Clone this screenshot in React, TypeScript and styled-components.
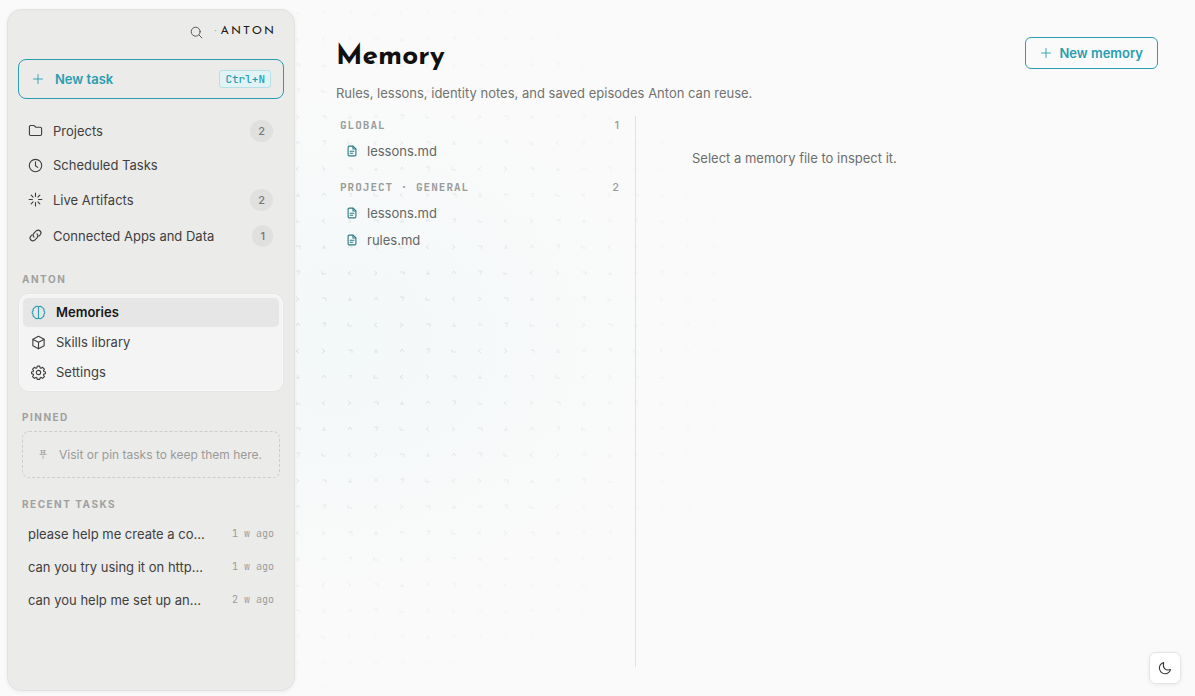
import React from "react";
import styled, { createGlobalStyle } from "styled-components";

const sans = `Inter, "Liberation Sans", sans-serif`;
const mono = `"JetBrains Mono", "Liberation Mono", monospace`;
const display = `"Josefin Sans", Lato, sans-serif`;

const Global = createGlobalStyle`
  *, *::before, *::after { box-sizing: border-box; }
  body { margin: 0; background: #fafafa; color: #3f403e; font: 13px/20px ${sans}; }
  button { font: inherit; color: inherit; cursor: pointer; }
  a { color: inherit; text-decoration: none; }
  ul { list-style: none; margin: 0; padding: 0; }
  h1, h2, p { margin: 0; }
`;

const Shell = styled.div`
  position: relative;
  display: flex;
  min-height: 100vh;
  padding: 9px 0 5px 7px;
`;

const Backdrop = styled.div`
  position: absolute;
  inset: 0;
  overflow: hidden;
  pointer-events: none;
  background: radial-gradient(ellipse 330px 260px at 340px 340px, #f3f8f9, #fafafa);
  svg {
    display: block;
    width: 100%;
    height: 100%;
    mask-image: radial-gradient(ellipse 440px 400px at 330px 330px, #000 20%, transparent);
  }
`;

const Sidebar = styled.aside`
  position: relative;
  flex: none;
  width: 288px;
  padding: 10px;
  border: 1px solid #e2e3e1;
  border-radius: 14px;
  background: #ebebe9;
  box-shadow: 0 1px 4px rgba(0, 0, 0, 0.06);
`;

const Brand = styled.header`
  display: flex;
  align-items: center;
  justify-content: flex-end;
  gap: 12px;
  height: 24px;
  margin-bottom: 15px;
  padding-right: 8px;
`;

const IconButton = styled.button`
  display: flex;
  padding: 0;
  border: 0;
  background: none;
  color: #555654;
`;

const Wordmark = styled.span`
  display: flex;
  gap: 4px;
  padding-bottom: 2px;
  color: #1c1c1b;
  font: 400 12px/20px ${display};
  letter-spacing: 2px;
  i { color: #999; font-style: normal; letter-spacing: 0; }
`;

const OutlineButton = styled.button<{ $wide?: boolean }>`
  display: flex;
  align-items: center;
  gap: ${(p) => (p.$wide ? 11 : 7)}px;
  width: ${(p) => (p.$wide ? "100%" : "auto")};
  height: ${(p) => (p.$wide ? 40 : 32)}px;
  padding: ${(p) => (p.$wide ? "0 12px 0 13px" : "0 14px")};
  border: 1px solid #2a9db1;
  border-radius: ${(p) => (p.$wide ? 8 : 6)}px;
  background: none;
  color: #2a9db1;
  font-weight: 600;
  white-space: nowrap;
`;

const Shortcut = styled.kbd`
  margin-left: auto;
  padding: 0 5px;
  border: 1px solid #b5e0e6;
  border-radius: 3px;
  background: #e1f3f5;
  font: 500 11px/16px ${mono};
`;

const PrimaryNav = styled.nav`
  display: flex;
  flex-direction: column;
  gap: 1px;
  margin-top: 14px;
`;

const NavLink = styled.a<{ $tall?: boolean }>`
  display: flex;
  align-items: center;
  gap: 10px;
  height: ${(p) => (p.$tall ? 35 : 32)}px;
  padding: 0 11px 0 10px;
`;

const Badge = styled.span`
  margin-left: auto;
  padding: 0 8px;
  border-radius: 11px;
  background: #e0e0de;
  color: #777876;
  font-size: 11px;
  font-weight: 500;
  line-height: 22px;
`;

const SectionLabel = styled.h2`
  margin: 19px 0 7px 4px;
  color: #a0a19f;
  font: 700 10px/14px ${sans};
  letter-spacing: 1.5px;
  text-transform: uppercase;
`;

const GroupCard = styled.nav`
  display: flex;
  flex-direction: column;
  gap: 1px;
  padding: 3px;
  margin: 8px 1px 0;
  border: 1px solid #f8f8f8;
  border-radius: 9px;
  background: #f4f4f4;
  box-shadow: 0 0 2px rgba(0, 0, 0, 0.08);
`;

const GroupLink = styled.a<{ $active?: boolean }>`
  display: flex;
  align-items: center;
  gap: 10px;
  height: 29px;
  padding: 0 8px 1px;
  border-radius: 5px;
  background: ${(p) => (p.$active ? "#e6e6e6" : "none")};
  color: ${(p) => (p.$active ? "#161616" : "inherit")};
  font-weight: ${(p) => (p.$active ? 600 : 400)};
  svg { color: ${(p) => (p.$active ? "#2a9db1" : "inherit")}; }
`;

const PinnedHint = styled.p`
  display: flex;
  align-items: center;
  gap: 11px;
  height: 47px;
  margin: 0 4px;
  padding: 0 15px;
  border: 1px dashed #cdcecc;
  border-radius: 7px;
  color: #9a9b99;
  font-size: 12px;
  white-space: nowrap;
`;

const TaskList = styled.ul`
  display: flex;
  flex-direction: column;
  gap: 1px;
`;

const TaskLink = styled.a`
  display: flex;
  align-items: center;
  gap: 22px;
  height: 32px;
  padding: 0 10px;
  span {
    flex: 1;
    min-width: 0;
    overflow: hidden;
    text-overflow: ellipsis;
    white-space: nowrap;
  }
  time { color: #9b9c9a; font: 10px/20px ${mono}; }
`;

const Main = styled.main`
  position: relative;
  display: flex;
  flex: 1;
  flex-direction: column;
  min-width: 0;
  padding: 28px 37px 24px 41px;
`;

const PageHeader = styled.header`
  display: flex;
  align-items: flex-start;
  justify-content: space-between;
  h1 { color: #101010; font: 700 28px/40px ${display}; }
  p { margin-top: 6px; color: #717371; }
`;

const Panels = styled.div`
  display: grid;
  flex: 1;
  grid-template-columns: 300px 1fr;
  margin-top: 13px;
`;

const FileColumn = styled.section`
  padding: 1px 16px 0 4px;
  border-right: 1px solid #e2e3e3;
`;

const FileGroup = styled.div`
  margin-bottom: 14px;
`;

const GroupHeading = styled.h2`
  display: flex;
  justify-content: space-between;
  margin-bottom: 5px;
  color: #999b99;
  font: 700 11px/16px ${mono};
  letter-spacing: 1px;
  text-transform: uppercase;
  span { font: 500 11px/16px ${sans}; letter-spacing: 0; }
`;

const FileButton = styled.button`
  display: flex;
  align-items: center;
  gap: 9px;
  width: 100%;
  height: 27px;
  padding: 0 6px 1px;
  border: 0;
  background: none;
  color: #626866;
  svg { color: #2d7a80; }
`;

const EmptyState = styled.p`
  padding: 32px 56px;
  color: #6c6e6c;
`;

const ThemeToggle = styled.button`
  position: fixed;
  right: 14px;
  bottom: 12px;
  display: grid;
  place-items: center;
  width: 32px;
  height: 32px;
  padding: 0;
  border: 1px solid #e4e4e4;
  border-radius: 7px;
  background: #fff;
  box-shadow: 0 1px 4px rgba(0, 0, 0, 0.07);
  color: #333;
`;

const shapes = {
  search: <><circle cx="7" cy="7" r="5.500" /><path d="m11.200 11.200 3.500 3.500" /></>,
  plus: <path d="M8 2v12M2 8h12" />,
  folder: <path d="M1.500 12V4c0-.800.500-1.300 1.300-1.300h3.100c.500 0 .800.200 1.100.500l1.200 1.300h5c.800 0 1.300.500 1.300 1.300V12c0 .800-.500 1.300-1.300 1.300H2.800c-.800 0-1.300-.500-1.300-1.300Z" />,
  clock: <><circle cx="8" cy="8" r="6.600" /><path d="M8 4v4.200l2.400 1.800" /></>,
  spark: <path d="M8 1.200v3.500M8 11.300v3.500M1.200 8h3.500M11.300 8h3.500M3.400 3.400l2 2M10.600 10.600l2 2M12.600 3.400l-2 2M5.400 10.600l-2 2" />,
  link: <><path d="M6.400 9.700a3 3 0 0 1 0-4.200l2.600-2.600a3 3 0 0 1 4.200 4.200l-1.500 1.500" /><path d="M9.600 6.300a3 3 0 0 1 0 4.200L7 13.100a3 3 0 0 1-4.200-4.200l1.500-1.500" /></>,
  brain: <path d="M8 1.800v12.400M8 2.200C6.800.800 4.400 1.300 4 3 2.400 3.400 1.800 5 2.300 6.200.900 7.200.900 8.900 2.300 9.800c-.500 1.600.300 2.900 1.700 3.200.500 1.700 2.900 2.200 4 .800 1.100 1.400 3.500.900 4-.800 1.400-.300 2.200-1.600 1.700-3.200 1.400-.900 1.400-2.600 0-3.600C14.200 5 13.600 3.400 12 3 11.600 1.300 9.200.800 8 2.200" />,
  cube: <><path d="m8 1.300 6 3.200v7L8 14.700l-6-3.200v-7Z" /><path d="m2.200 4.700 5.800 3.100 5.800-3.100M8 7.800v6.700" /></>,
  gear: <><circle cx="8" cy="8" r="2.300" /><path d="m6.700 1.200h2.600l.500 1.900.900.400 1.700-1 1.900 1.900-1 1.700.400.900 1.900.500v1.600l-1.900.600-.400.900 1 1.700-1.900 1.900-1.700-1-.900.400-.500 1.700H6.700l-.500-1.700-.900-.400-1.700 1-1.900-1.900 1-1.700-.400-.900-1.900-.600V7.500l1.900-.500.400-.900-1-1.700 1.900-1.900 1.700 1 .900-.400Z" /></>,
  pin: <path d="M4.500 1h7M5.500 1v5.500M10.500 1v5.500M5.500 4h5M3 7h10M8 9.500v3.500" />,
  file: <><path d="M9.500 1.500H4.300c-.900 0-1.500.600-1.500 1.500v10c0 .900.600 1.500 1.500 1.500h7.400c.900 0 1.500-.600 1.500-1.500V5.200Z" /><path d="M9.300 1.700v3.700H13M5.500 8.300h5M5.500 11h3.500" /></>,
  moon: <path d="M6.500 1.800C5.700 5 6 7 7.500 8.600c1.600 1.700 3.800 2.200 6.800 1.200-1 2.900-3.300 4.700-6.200 4.700A6.500 6.500 0 0 1 1.600 8c0-2.800 1.900-5.200 4.900-6.200Z" />,
};

function Icon({ name, size = 15, weight = 1.2 }: { name: keyof typeof shapes; size?: number; weight?: number }) {
  return (
    <svg width={size} height={size} viewBox="0 0 16 16" fill="none" stroke="currentColor"
      strokeWidth={weight} strokeLinecap="round" strokeLinejoin="round" aria-hidden="true">
      {shapes[name]}
    </svg>
  );
}

function GlyphField() {
  const marks = ["M0 3h4M2 0v3", "M0 0l3 2-3 2", "M0 0v3h4", "M0 3l2-3 2 3", "M0 1h4v3", "M3 0L0 2l3 2", "M0 0h4L2 4"];
  return (
    <Backdrop aria-hidden="true">
      <svg>
        <defs>
          <pattern id="glyphs" x="296" y="11" width="182" height="182" patternUnits="userSpaceOnUse">
            {Array.from({ length: 49 }, (_, i) => (
              <path key={i} d={marks[(i * 3 + Math.floor(i / 7) * 2) % 7]}
                transform={`translate(${(i % 7) * 26} ${Math.floor(i / 7) * 26})`}
                fill="none" stroke="#d3dada" strokeWidth="0.7" />
            ))}
          </pattern>
        </defs>
        <rect width="100%" height="100%" fill="url(#glyphs)" />
      </svg>
    </Backdrop>
  );
}

const primary = [
  { icon: "folder", label: "Projects", count: 2 },
  { icon: "clock", label: "Scheduled Tasks" },
  { icon: "spark", label: "Live Artifacts", count: 2 },
  { icon: "link", label: "Connected Apps and Data", count: 1 },
] as const;

const anton = [
  { icon: "brain", label: "Memories" },
  { icon: "cube", label: "Skills library" },
  { icon: "gear", label: "Settings" },
] as const;

const tasks = [
  ["please help me create a co...", "1 w ago"],
  ["can you try using it on http...", "1 w ago"],
  ["can you help me set up an...", "2 w ago"],
];

const groups = [
  { name: "Global", files: ["lessons.md"] },
  { name: "Project · General", files: ["lessons.md", "rules.md"] },
];

export default function App() {
  return (
    <>
      <Global />
      <Shell>
        <GlyphField />
        <Sidebar>
          <Brand>
            <IconButton aria-label="Search"><Icon name="search" size={13} /></IconButton>
            <Wordmark><i>·</i>ANTON</Wordmark>
          </Brand>
          <OutlineButton $wide>
            <Icon name="plus" size={12} />
            New task
            <Shortcut>Ctrl+N</Shortcut>
          </OutlineButton>
          <PrimaryNav aria-label="Primary">
            {primary.map((item) => (
              <NavLink key={item.label} href="#" $tall={"count" in item}>
                <Icon name={item.icon} />
                {item.label}
                {"count" in item && <Badge>{item.count}</Badge>}
              </NavLink>
            ))}
          </PrimaryNav>
          <SectionLabel>Anton</SectionLabel>
          <GroupCard aria-label="Anton">
            {anton.map((item, i) => (
              <GroupLink key={item.label} href="#" $active={i === 0}>
                <Icon name={item.icon} />
                {item.label}
              </GroupLink>
            ))}
          </GroupCard>
          <SectionLabel>Pinned</SectionLabel>
          <PinnedHint>
            <Icon name="pin" size={10} />
            Visit or pin tasks to keep them here.
          </PinnedHint>
          <SectionLabel>Recent tasks</SectionLabel>
          <TaskList>
            {tasks.map(([title, age]) => (
              <li key={title}>
                <TaskLink href="#"><span>{title}</span><time>{age}</time></TaskLink>
              </li>
            ))}
          </TaskList>
        </Sidebar>
        <Main>
          <PageHeader>
            <div>
              <h1>Memory</h1>
              <p>Rules, lessons, identity notes, and saved episodes Anton can reuse.</p>
            </div>
            <OutlineButton><Icon name="plus" size={12} />New memory</OutlineButton>
          </PageHeader>
          <Panels>
            <FileColumn aria-label="Memory files">
              {groups.map((group) => (
                <FileGroup key={group.name}>
                  <GroupHeading>{group.name}<span>{group.files.length}</span></GroupHeading>
                  {group.files.map((file) => (
                    <FileButton key={file}><Icon name="file" size={12} weight={1.5} />{file}</FileButton>
                  ))}
                </FileGroup>
              ))}
            </FileColumn>
            <EmptyState>Select a memory file to inspect it.</EmptyState>
          </Panels>
        </Main>
        <ThemeToggle aria-label="Switch to dark theme"><Icon name="moon" size={14} /></ThemeToggle>
      </Shell>
    </>
  );
}
